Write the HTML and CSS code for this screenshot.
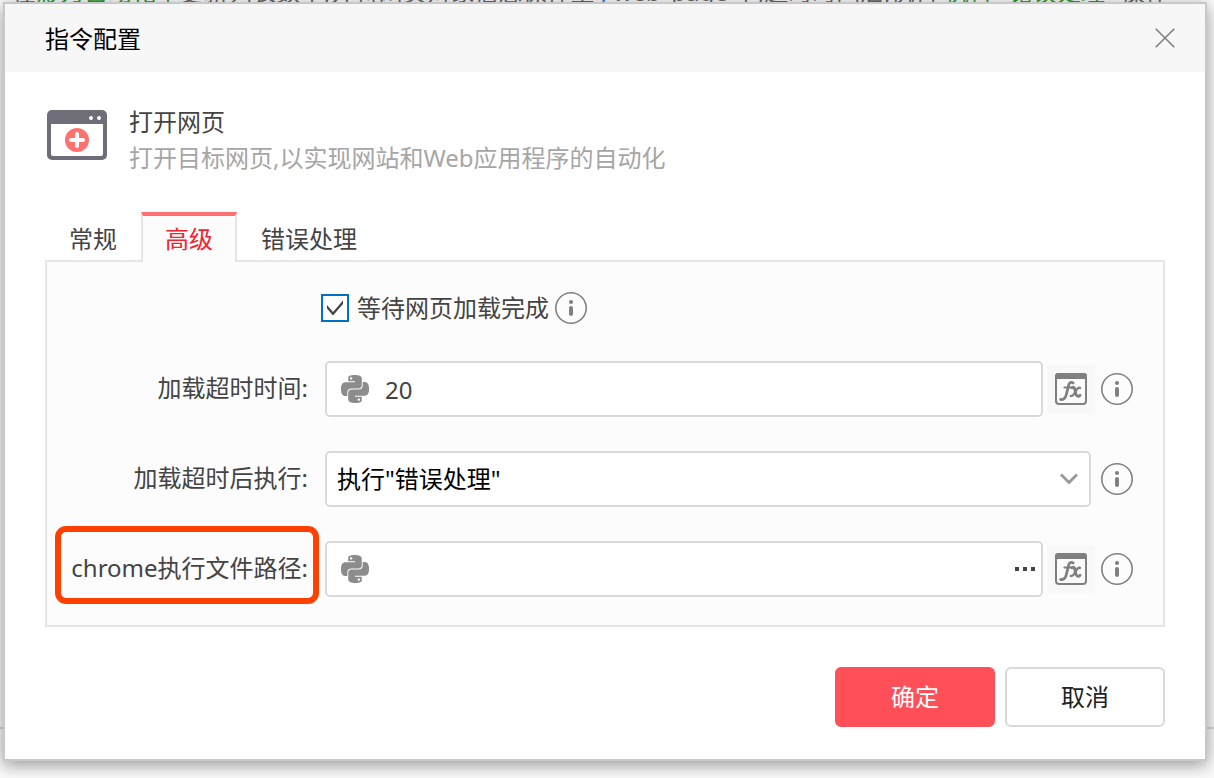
FILE: index.html
```html
<!DOCTYPE html>
<html lang="zh-CN">
<head>
<meta charset="utf-8">
<title>指令配置</title>
<link rel="stylesheet" href="styles.css">
</head>
<body>
<svg width="0" height="0" class="sprite" aria-hidden="true">
  <symbol id="info" viewBox="0 0 32 32">
    <circle cx="16" cy="16" r="15.200" fill="none" stroke="#808080" stroke-width="1.600"/>
    <circle cx="16" cy="10" r="2.1" fill="#808080"/>
    <rect x="14" y="14" width="4" height="10" rx="2" fill="#808080"/>
  </symbol>
  <symbol id="fx" viewBox="0 0 32 32">
    <rect x="1" y="1" width="30" height="30" rx="3" fill="#fbfbfb" stroke="#808080" stroke-width="2"/>
    <path d="M0 6V3a3 3 0 0 1 3-3h26a3 3 0 0 1 3 3v3z" fill="#808080"/>
    <g fill="none" stroke="#808080" stroke-linecap="round" stroke-linejoin="round">
      <path d="M18.200 10C16.400 8.600 14.400 9.600 13.700 12L11.200 22C10.500 25 8.200 27.200 5.600 26.400" stroke-width="2.800"/>
      <path d="M9.500 14.500H17" stroke-width="2.200"/>
      <path d="M17 14.700C18.800 13.700 19.500 14.800 19.900 16.600L20.900 21C21.400 23.400 23.300 23.800 25 22.300" stroke-width="2.900"/>
      <path d="M25 14.900C22.800 14.300 21.600 16.400 20.400 18.700C19.100 21.200 17.700 23.500 15.800 22.900" stroke-width="2.400"/>
    </g>
  </symbol>
  <symbol id="python" viewBox="0 0 24 24">
    <path fill="#8c8c8c" d="M14.25.18l.9.2.73.26.59.3.45.32.34.34.25.34.16.33.1.3.04.26.02.2-.01.13V8.5l-.05.63-.13.55-.21.46-.26.38-.3.31-.33.25-.35.19-.35.14-.33.1-.3.07-.26.04-.21.02H8.77l-.69.05-.59.14-.5.22-.41.27-.33.32-.27.35-.2.36-.15.37-.1.35-.07.32-.04.27-.02.21v3.06H3.17l-.21-.03-.28-.07-.32-.12-.35-.18-.36-.26-.36-.36-.35-.46-.32-.59-.28-.73-.21-.88-.14-1.05-.05-1.23.06-1.22.16-1.04.24-.87.32-.71.36-.57.4-.44.42-.33.42-.24.4-.16.36-.1.32-.05.24-.01h.16l.06.01h8.16v-.83H6.18l-.01-2.75-.02-.37.05-.34.11-.31.17-.28.25-.26.31-.23.38-.2.44-.18.51-.15.58-.12.64-.1.71-.06.77-.04.84-.02 1.27.05zm-6.3 1.98l-.23.33-.08.41.08.41.23.34.33.22.41.09.41-.09.33-.22.23-.34.08-.41-.08-.41-.23-.33-.33-.22-.41-.09-.41.09zm13.09 3.95l.28.06.32.12.35.18.36.27.36.35.35.47.32.59.28.73.21.88.14 1.04.05 1.23-.06 1.23-.16 1.04-.24.86-.32.71-.36.57-.4.45-.42.33-.42.24-.4.16-.36.09-.32.05-.24.02-.16-.01h-8.22v.82h5.84l.01 2.76.02.36-.05.34-.11.31-.17.29-.25.25-.31.24-.38.2-.44.17-.51.15-.58.13-.64.09-.71.07-.77.04-.84.01-1.27-.04-1.07-.14-.9-.2-.73-.25-.59-.3-.45-.33-.34-.34-.25-.34-.16-.33-.1-.3-.04-.25-.02-.2.01-.13v-5.34l.05-.64.13-.54.21-.46.26-.38.3-.32.33-.24.35-.2.35-.14.33-.1.3-.06.26-.04.21-.02.13-.01h5.84l.69-.05.59-.14.5-.21.41-.28.33-.32.27-.35.2-.36.15-.36.1-.35.07-.32.04-.28.02-.21V6.07h2.09l.14.01zm-6.47 14.25l-.23.33-.08.41.08.41.23.33.33.23.41.08.41-.08.33-.23.23-.33.08-.41-.08-.41-.23-.33-.33-.23-.41-.08-.41.08z"/>
  </symbol>
</svg>

<div class="backdrop" aria-hidden="true">
  <p class="log-line">在<span class="key">影刀自动化中</span>更新列表数字,并将网页对象信息保存至 <span class="link">,</span> web_page 中,超时时间后,执行 <span class="key">执行 "错误处理"</span> 操作</p>
</div>

<main class="dialog" role="dialog" aria-labelledby="dialog-title">
  <header class="dialog-header">
    <h1 id="dialog-title" class="dialog-title">指令配置</h1>
    <button class="close" type="button" aria-label="关闭">
      <svg width="20" height="20" viewBox="0 0 20 20"><path d="M.7.7l18.6 18.6M19.3.7L.7 19.3" stroke="#808080" stroke-width="1.6" fill="none"/></svg>
    </button>
  </header>

  <form class="dialog-body">
    <section class="command">
      <svg class="command-icon" width="60" height="50" viewBox="0 0 60 50" aria-hidden="true">
        <rect width="60" height="50" rx="5" fill="#6e6d78"/>
        <path d="M4 14h52v30a2 2 0 0 1-2 2H6a2 2 0 0 1-2-2z" fill="#fff"/>
        <circle cx="44" cy="8" r="2" fill="#fff"/><circle cx="52" cy="8" r="2" fill="#fff"/>
        <circle cx="30" cy="30" r="12" fill="#ff7070"/>
        <path d="M30 24v12M24 30h12" stroke="#fff" stroke-width="4" stroke-linecap="round"/>
      </svg>
      <div>
        <h2 class="command-name">打开网页</h2>
        <p class="command-note">打开目标网页,以实现网站和Web应用程序的自动化</p>
      </div>
    </section>

    <div class="tabs" role="tablist">
      <button class="tab" type="button" role="tab">常规</button>
      <button class="tab tab-active" type="button" role="tab" aria-selected="true">高级</button>
      <button class="tab" type="button" role="tab">错误处理</button>
    </div>

    <section class="panel" role="tabpanel">
      <div class="check-row">
        <span class="check">
          <input id="wait" class="check-input" type="checkbox" checked>
          <svg class="check-mark" width="28" height="28" viewBox="0 0 28 28" aria-hidden="true"><path d="M6 11v3.500l6 7L22 10V6.500L12 18z" fill="#444"/></svg>
        </span>
        <label class="check-label" for="wait">等待网页加载完成</label>
        <button class="info" type="button" aria-label="说明"><svg width="32" height="32"><use href="#info"/></svg></button>
      </div>

      <div class="row">
        <label class="label" for="timeout">加载超时时间:</label>
        <div class="field">
          <svg width="28" height="28" aria-hidden="true"><use href="#python"/></svg>
          <input id="timeout" class="input" type="text" value="20">
        </div>
        <button class="fx" type="button" aria-label="函数"><svg width="32" height="32"><use href="#fx"/></svg></button>
        <button class="info" type="button" aria-label="说明"><svg width="32" height="32"><use href="#info"/></svg></button>
      </div>

      <div class="row">
        <label class="label" for="after">加载超时后执行:</label>
        <div class="field field-select">
          <select id="after" class="select"><option>执行"错误处理"</option></select>
          <svg class="chevron" width="18" height="12" viewBox="0 0 18 12" aria-hidden="true"><path d="M1 1.500l8 8 8-8" fill="none" stroke="#999" stroke-width="2.800"/></svg>
        </div>
        <button class="info" type="button" aria-label="说明"><svg width="32" height="32"><use href="#info"/></svg></button>
      </div>

      <div class="row">
        <label class="label label-marked" for="path">chrome执行文件路径:</label>
        <div class="field">
          <svg width="28" height="28" aria-hidden="true"><use href="#python"/></svg>
          <input id="path" class="input" type="text">
          <button class="browse" type="button" aria-label="浏览"><svg width="20" height="4" viewBox="0 0 20 4"><path d="M0 0h4v4H0zM8 0h4v4H8zM16 0h4v4h-4z" fill="#444"/></svg></button>
        </div>
        <button class="fx" type="button" aria-label="函数"><svg width="32" height="32"><use href="#fx"/></svg></button>
        <button class="info" type="button" aria-label="说明"><svg width="32" height="32"><use href="#info"/></svg></button>
      </div>
    </section>

    <footer class="actions">
      <button class="button button-primary" type="submit">确定</button>
      <button class="button" type="button">取消</button>
    </footer>
  </form>
</main>
</body>
</html>
```
FILE: styles.css
```css
* {
  box-sizing: border-box;
}

body {
  margin: 0;
  padding: 2px 7px 17px 3px;
  background: #fafafa;
  color: #444;
  font: 24px/36px "Noto Sans", "Noto Sans CJK SC", sans-serif;
  overflow: hidden;
}

h1, h2, p {
  margin: 0;
  font-size: 24px;
  font-weight: 400;
}

button, input, select {
  margin: 0;
  padding: 0;
  border: 0;
  background: none;
  color: inherit;
  font: inherit;
}

svg {
  display: block;
  flex: none;
}

.sprite {
  position: absolute;
}

.backdrop {
  position: absolute;
  inset: 0 0 auto;
  height: 729px;
  border-bottom: 2px solid #d8d8d8;
  overflow: hidden;
}

.log-line {
  margin-top: -26px;
  padding-left: 12px;
  color: #666;
  white-space: nowrap;
}

.key {
  color: #2f9e2f;
}

.link {
  color: #1677ff;
}

.dialog {
  position: relative;
  border: 2px solid #c8c8c8;
  background: #fff;
  box-shadow: 0 4px 16px rgba(0, 0, 0, 0.4);
}

.dialog-header {
  display: flex;
  align-items: center;
  justify-content: space-between;
  height: 68px;
  padding: 0 30px 0 40px;
  background: #f7f7f7;
}

.dialog-title {
  padding-top: 2px;
  color: #000;
}

.dialog-body {
  padding: 32px 40px;
}

.command {
  display: flex;
  gap: 22px;
  padding-left: 2px;
}

.command-icon {
  margin-top: 6px;
}

.command-note {
  color: #a6a6a6;
}

.tabs {
  position: relative;
  display: flex;
  margin: 36px 0 -2px;
}

.tab {
  height: 50px;
  padding: 4px 24px 0;
}

.tab-active {
  padding: 0 22px;
  border: 2px solid #e6e6e6;
  border-top: 4px solid #ff7070;
  border-bottom: 0;
  background: #fcfcfc;
  color: #f5222d;
}

.panel {
  display: grid;
  gap: 34px;
  padding: 30px 30px 28px 0;
  border: 2px solid #e6e6e6;
  background: #fcfcfc;
}

.check-row {
  display: flex;
  align-items: center;
  height: 32px;
  margin-bottom: 3px;
  padding-left: 274px;
}

.check {
  display: grid;
}

.check-input {
  grid-area: 1 / 1;
  appearance: none;
  width: 28px;
  height: 28px;
  border: 2px solid #0070c8;
  background: #fff;
}

.check-mark {
  grid-area: 1 / 1;
  pointer-events: none;
}

.check-label {
  margin: 0 6px 0 8px;
}

.row {
  display: flex;
  align-items: center;
}

.label {
  flex: none;
  width: 261px;
  margin-right: 17px;
  padding-bottom: 3px;
  text-align: right;
}

.label-marked {
  position: relative;
}

.label-marked::after {
  content: "";
  position: absolute;
  inset: -24px -11px -15px 8px;
  border: 6px solid #ff4000;
  border-radius: 11px;
}

.field {
  display: flex;
  flex: 1;
  align-items: center;
  gap: 16px;
  min-width: 0;
  height: 56px;
  padding: 0 6px 0 14px;
  border: 2px solid #d9d9d9;
  border-radius: 5px;
  background: #fff;
}

.input {
  flex: 1;
  min-width: 0;
  height: 100%;
  outline: 0;
}

.field-select {
  display: grid;
  margin-right: 4px;
  padding: 0;
}

.select {
  grid-area: 1 / 1;
  appearance: none;
  width: 100%;
  height: 52px;
  padding: 0 40px 0 10px;
  color: #000;
}

.chevron {
  grid-area: 1 / 1;
  justify-self: end;
  margin-right: 11px;
  pointer-events: none;
}

.fx {
  display: grid;
  place-items: center;
  width: 48px;
  height: 48px;
  margin-left: 4px;
  background: #f8f8f8;
}

.info {
  flex: none;
  margin-left: 6px;
}

.check-row .info {
  margin-left: 0;
}

.actions {
  display: flex;
  justify-content: flex-end;
  gap: 10px;
  margin-top: 40px;
}

.button {
  width: 160px;
  height: 60px;
  border: 2px solid #d9d9d9;
  border-radius: 6px;
  background: #fff;
  color: #222;
}

.button-primary {
  border-color: #ff4f58;
  background: #ff4f58;
  color: #fff;
}
```
